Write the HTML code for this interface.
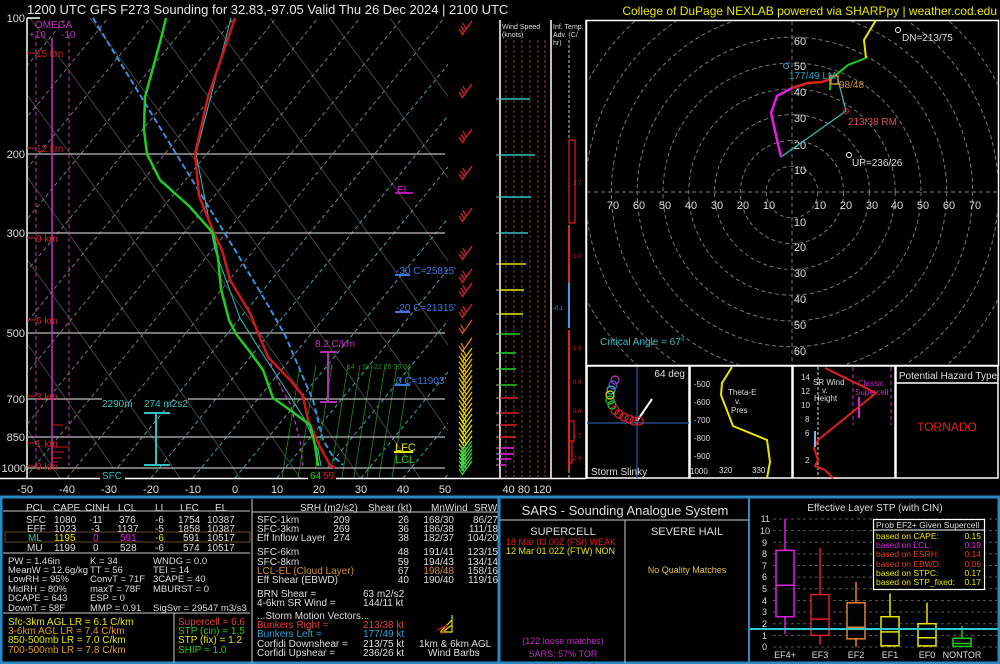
<!DOCTYPE html>
<html><head><meta charset="utf-8"><style>
html,body{margin:0;padding:0;background:#000;width:1000px;height:664px;overflow:hidden}
svg{display:block;font-family:"Liberation Sans",sans-serif}
</style></head><body>
<svg id="s" width="1000" height="664" viewBox="0 0 1000 664" xmlns="http://www.w3.org/2000/svg">
<rect width="1000" height="664" fill="#000"/>
<g id="grid"></g>
<text x="27" y="14" fill="#e8e8e8" font-size="13">1200 UTC GFS F273 Sounding for 32.83,-97.05 Valid  Thu 26 Dec 2024 | 2100 UTC</text>
<text x="997" y="15" fill="#e6e600" font-size="12" text-anchor="end">College of DuPage NEXLAB powered via SHARPpy | weather.cod.edu</text>
<line x1="27" y1="18" x2="27" y2="479" stroke="#fff" stroke-width="1.5"/>
<line x1="27" y1="18" x2="40" y2="18" stroke="#fff" stroke-width="1.5"/>
<line x1="0" y1="478.5" x2="586" y2="478.5" stroke="#fff" stroke-width="1.5"/>
<g fill="#ddd" font-size="11" text-anchor="end">
<text x="25" y="22">100</text><text x="25" y="158">200</text><text x="25" y="237">300</text><text x="25" y="337">500</text><text x="25" y="403">700</text><text x="25" y="441">850</text><text x="26" y="472">1000</text>
</g>
<g stroke="#bbb" stroke-width="1.3">
<line x1="27" y1="154" x2="445" y2="154"/><line x1="27" y1="233" x2="445" y2="233"/><line x1="27" y1="333" x2="445" y2="333"/>
<line x1="27" y1="399" x2="102" y2="399"/><line x1="188" y1="399" x2="445" y2="399"/>
<line x1="27" y1="437" x2="445" y2="437"/><line x1="27" y1="468" x2="445" y2="468"/>
</g>
<g fill="#ddd" font-size="11" text-anchor="middle">
<text x="25" y="493">-50</text><text x="67" y="493">-40</text><text x="109" y="493">-30</text><text x="151" y="493">-20</text><text x="193" y="493">-10</text><text x="235" y="493">0</text><text x="277" y="493">10</text><text x="319" y="493">20</text><text x="361" y="493">30</text><text x="403" y="493">40</text><text x="445" y="493">50</text>
<text x="527" y="493" text-anchor="middle">40  80 120</text>
</g>
<g stroke="#c030c0" stroke-width="1"><line x1="36" y1="35" x2="36" y2="468" stroke-dasharray="4,3"/><line x1="69" y1="35" x2="69" y2="468" stroke-dasharray="4,3"/><line x1="52" y1="38" x2="52" y2="468" stroke-width="1.5"/></g>
<text x="35" y="28" fill="#c030c0" font-size="10">OMEGA</text>
<text x="29" y="38" fill="#c030c0" font-size="10">+10</text><text x="61" y="38" fill="#c030c0" font-size="10">-10</text>
<g fill="#d02020" font-size="10"><text x="36" y="57">15 km</text><text x="36" y="152">12 km</text><text x="36" y="242">9 km</text><text x="36" y="324">6 km</text><text x="36" y="400">3 km</text><text x="36" y="447">1 km</text><text x="36" y="470">0 km</text></g>
<g stroke="#d02020"><line x1="27" y1="53" x2="36" y2="53"/><line x1="27" y1="148" x2="36" y2="148"/><line x1="27" y1="238" x2="36" y2="238"/><line x1="27" y1="320" x2="36" y2="320"/><line x1="27" y1="396" x2="36" y2="396"/><line x1="27" y1="443" x2="36" y2="443"/><line x1="27" y1="466" x2="36" y2="466"/>
<line x1="52" y1="425" x2="63" y2="425"/><line x1="52" y1="447" x2="70" y2="447"/><line x1="52" y1="452" x2="64" y2="452"/><line x1="52" y1="458" x2="62" y2="458"/><line x1="52" y1="462" x2="58" y2="462"/></g>
<polyline fill="none" stroke="#3a8ee0" stroke-width="2" stroke-dasharray="6,3" points="93,18 235,250 265,300 285,335 300,370 313,400 323,440 332,455 343,465"/>
<polyline fill="none" stroke="#c030c0" stroke-width="1.3" stroke-dasharray="4,3" points="265,350 282,390 290,403 300,440 303,467"/>
<polyline fill="none" stroke="#30c0c0" stroke-width="1" points="231,18 196,154 215,250 240,318 260,350 283,385 305,420 318,450 321,466"/>
<polyline fill="none" stroke="#d01818" stroke-width="2.5" points="235,18 208,97 195,154 199,196 214,233 222,250 230,280 250,313 268,357 290,380 303,396 308,420 320,447 330,465 335,468"/>
<polyline fill="none" stroke="#20cc20" stroke-width="2.5" points="166,18 162,35 145,97 144,130 147,154 160,180 190,207 213,233 218,258 221,289 229,320 236,334 250,352 263,370 273,398 290,410 310,425 315,445 318,466"/>
<text x="102" y="407" fill="#30c0c0" font-size="10">2290m</text>
<text x="144" y="407" fill="#30c0c0" font-size="10">274 m2s2</text>
<g stroke="#30c0c0" stroke-width="2"><line x1="156" y1="413" x2="156" y2="465"/><line x1="144" y1="413" x2="170" y2="413"/><line x1="144" y1="465" x2="170" y2="465"/></g>
<rect x="100" y="469" width="25" height="12" fill="#000"/><text x="102" y="479" fill="#30c0c0" font-size="10">SFC</text>
<text x="315" y="347" fill="#c030c0" font-size="10">8.2 C/km</text>
<g stroke="#b030b0" stroke-width="2"><line x1="328" y1="352" x2="328" y2="402"/><line x1="320" y1="352" x2="337" y2="352"/><line x1="320" y1="402" x2="337" y2="402"/></g>
<text x="397" y="193" fill="#e020e0" font-size="10">EL</text><line x1="395" y1="193" x2="413" y2="193" stroke="#e020e0" stroke-width="1.5"/>
<g fill="#3a78e0" font-size="10"><text x="396" y="274">-30 C=25815'</text><text x="396" y="311">-20 C=21315'</text><text x="396" y="384">0 C=11903'</text></g>
<g stroke="#3a78e0" stroke-width="2"><line x1="395" y1="275" x2="410" y2="275"/><line x1="395" y1="312" x2="410" y2="312"/><line x1="395" y1="385" x2="410" y2="385"/></g>
<text x="395" y="451" fill="#e6e600" font-size="11">LFC</text><line x1="394" y1="452" x2="413" y2="452" stroke="#e6e600" stroke-width="2"/>
<text x="395" y="463" fill="#20c020" font-size="11">LCL</text>
<rect x="308" y="469" width="28" height="12" fill="#000"/>
<text x="310" y="479" fill="#20cc20" font-size="10">64</text><text x="323" y="479" fill="#e02020" font-size="10">59</text>
<g fill="#2a8a2a" font-size="7"><text x="325" y="369">10</text><text x="347" y="369">14</text><text x="362" y="369">18</text><text x="374" y="369">22 26 30 34</text></g>
<g id="barbs"></g>
<line x1="500" y1="20" x2="500" y2="479" stroke="#fff" stroke-width="1.5"/>
<line x1="551" y1="20" x2="551" y2="479" stroke="#fff" stroke-width="1.5"/>
<line x1="586" y1="20" x2="586" y2="479" stroke="#fff" stroke-width="1.5"/>
<text x="502" y="29" fill="#ddd" font-size="7">Wind Speed</text><text x="502" y="37" fill="#ddd" font-size="7">(knots)</text>
<text x="553" y="29" fill="#ddd" font-size="7">Inf. Temp.</text><text x="553" y="37" fill="#ddd" font-size="7">Adv. (C/</text><text x="553" y="45" fill="#ddd" font-size="7">hr)</text>
<g id="ws"></g>
<line x1="569" y1="40" x2="569" y2="478" stroke="#ccc" stroke-dasharray="3,2"/>
<g fill="none" stroke="#e02020" stroke-width="1.2"><rect x="569" y="140" width="6" height="83"/><line x1="569" y1="227" x2="569" y2="282" stroke-width="2"/><line x1="569" y1="330" x2="569" y2="470" stroke-width="2"/><rect x="569" y="421" width="5" height="20"/><rect x="569" y="441" width="3" height="22"/></g>
<line x1="569" y1="283" x2="569" y2="328" stroke="#4a9ae0" stroke-width="2"/>
<g fill="#d02020" font-size="6"><text x="573" y="185">3.7</text><text x="573" y="258">1.0</text><text x="573" y="350">1.3</text><text x="573" y="384">0.4</text><text x="573" y="413">0.6</text><text x="573" y="438">5.7</text><text x="573" y="460">2.4</text></g>
<text x="553" y="310" fill="#4a9ae0" font-size="6">-0.1</text>
<rect x="586.5" y="20.5" width="412" height="345" fill="none" stroke="#fff" stroke-width="1.5"/>
<g id="hodo"></g>
<g fill="#ddd" font-size="11" text-anchor="middle">
<text x="800" y="45">60</text><text x="800" y="70">50</text><text x="800" y="96">40</text><text x="800" y="122">30</text><text x="800" y="149">20</text><text x="800" y="174">10</text>
<text x="800" y="226">10</text><text x="800" y="251">20</text><text x="800" y="277">30</text><text x="800" y="303">40</text><text x="800" y="329">50</text><text x="800" y="355">60</text>
<text x="613" y="209">70</text><text x="639" y="209">60</text><text x="665" y="209">50</text><text x="691" y="209">40</text><text x="717" y="209">30</text><text x="743" y="209">20</text><text x="769" y="209">10</text>
<text x="820" y="209">10</text><text x="846" y="209">20</text><text x="872" y="209">30</text><text x="897" y="209">40</text><text x="923" y="209">50</text><text x="949" y="209">60</text><text x="975" y="209">70</text>
</g>
<polyline fill="none" stroke="#30c0c0" stroke-width="1.2" points="781,157 846,111 838,80"/>
<polyline fill="none" stroke="#e020e0" stroke-width="2.5" points="781,157 771,113 777,96 792,88"/>
<polyline fill="none" stroke="#e02020" stroke-width="2.5" points="792,88 808,83 822,82 831,79"/>
<polyline fill="none" stroke="#20cc20" stroke-width="2" points="830,90 831,79 848,65 866,58"/>
<polyline fill="none" stroke="#e6e600" stroke-width="2" points="866,58 864,40 876,20"/>
<rect x="830" y="76" width="8" height="8" fill="none" stroke="#d09030" stroke-width="1.5"/>
<circle cx="786" cy="66" r="2.5" fill="none" stroke="#30a0c0"/><circle cx="846" cy="111" r="2.5" fill="none" stroke="#e02020"/>
<circle cx="898" cy="30" r="2.5" fill="none" stroke="#fff"/><circle cx="849" cy="155" r="2.5" fill="none" stroke="#fff"/>
<text x="902" y="41" fill="#ddd" font-size="10">DN=213/75</text>
<text x="852" y="166" fill="#ddd" font-size="10">UP=236/26</text>
<text x="789" y="79" fill="#30a0c0" font-size="10">177/49 LM</text>
<text x="839" y="88" fill="#d09030" font-size="10">98/48</text>
<text x="848" y="125" fill="#e05050" font-size="10">213/38 RM</text>
<text x="600" y="345" fill="#30c0c0" font-size="10">Critical Angle = 67°</text>
<g fill="none" stroke="#fff" stroke-width="1.5"><rect x="587" y="366" width="102" height="112"/><rect x="690" y="366" width="102" height="112"/><rect x="793" y="366" width="102" height="112"/><rect x="896" y="366" width="102" height="112"/><line x1="896" y1="383" x2="998" y2="383"/></g>
<line x1="587" y1="423" x2="689" y2="423" stroke="#1a4a8a" stroke-width="1.5"/><line x1="637" y1="367" x2="637" y2="478" stroke="#1a4a8a" stroke-width="1.5"/>
<text x="685" y="377" fill="#ddd" font-size="10" text-anchor="end">64 deg</text>
<text x="591" y="475" fill="#ddd" font-size="10">Storm Slinky</text>
<line x1="637" y1="421" x2="652" y2="399" stroke="#fff" stroke-width="2"/>
<g fill="none" stroke-width="1.2"><circle cx="615" cy="380" r="4" stroke="#c030c0"/><circle cx="613" cy="385" r="4" stroke="#4060e0"/><circle cx="611" cy="390" r="4" stroke="#30c0c0"/><circle cx="610" cy="395" r="4" stroke="#e6e600"/><circle cx="610" cy="400" r="4" stroke="#20cc20"/><circle cx="612" cy="405" r="4" stroke="#20cc20"/><circle cx="615" cy="410" r="4" stroke="#e02020"/><circle cx="619" cy="414" r="4" stroke="#e02020"/><circle cx="624" cy="417" r="4" stroke="#e02020"/><circle cx="629" cy="419" r="4" stroke="#e02020"/><circle cx="634" cy="421" r="4" stroke="#e02020"/><circle cx="639" cy="421" r="4" stroke="#e02020"/></g>
<polyline fill="none" stroke="#e6e600" stroke-width="2" points="732,367 722,383 721,395 733,426 767,440 770,462 767,478"/>
<g fill="#ddd" font-size="8"><text x="694" y="387">-500</text><text x="694" y="405">-600</text><text x="694" y="423">-700</text><text x="694" y="441">-800</text><text x="694" y="459">-900</text><text x="690" y="474">1000</text><text x="719" y="473">320</text><text x="752" y="473">330</text>
<text x="728" y="395">Theta-E</text><text x="735" y="404">v.</text><text x="731" y="413">Pres</text></g>
<line x1="818" y1="367" x2="818" y2="478" stroke="#ddd" stroke-dasharray="3,2"/>
<line x1="853" y1="367" x2="853" y2="425" stroke="#c030c0" stroke-dasharray="4,3"/><line x1="891" y1="367" x2="891" y2="425" stroke="#c030c0" stroke-dasharray="4,3"/>
<g fill="#ddd" font-size="8"><text x="801" y="380">14</text><text x="801" y="394">12</text><text x="801" y="408">10</text><text x="805" y="422">8</text><text x="805" y="436">6</text><text x="805" y="463">2</text>
<text x="813" y="385">SR Wind</text><text x="822" y="393">v.</text><text x="814" y="401">Height</text></g>
<text x="858" y="386" fill="#c030c0" font-size="8">Classic</text><text x="855" y="395" fill="#c030c0" font-size="8">Supercell</text>
<line x1="859" y1="397" x2="859" y2="418" stroke="#e020e0" stroke-width="2"/>
<polyline fill="none" stroke="#e02020" stroke-width="2" points="825,368 876,393 818,440 814,448 818,460 815,466 825,470 833,478"/>
<line x1="815" y1="431" x2="815" y2="447" stroke="#8ab0f0" stroke-width="2"/>
<text x="948" y="379" fill="#ddd" font-size="10" text-anchor="middle">Potential Hazard Type</text>
<text x="947" y="431" fill="#e02020" font-size="12" text-anchor="middle">TORNADO</text>
<rect x="1" y="497" width="998" height="166" fill="none" stroke="#2a8ac8" stroke-width="3"/>
<line x1="499" y1="497" x2="499" y2="664" stroke="#2a8ac8" stroke-width="3"/>
<line x1="749" y1="497" x2="749" y2="664" stroke="#2a8ac8" stroke-width="2"/>
<g stroke="#ccc" stroke-width="1"><line x1="3" y1="511" x2="250" y2="511"/><line x1="3" y1="553" x2="250" y2="553"/><line x1="3" y1="613" x2="250" y2="613"/><line x1="174" y1="613" x2="174" y2="663"/><line x1="252" y1="499" x2="252" y2="663"/><line x1="252" y1="512" x2="498" y2="512"/><line x1="500" y1="520" x2="749" y2="520"/><line x1="625" y1="520" x2="625" y2="663"/></g>
<rect x="5" y="532" width="245" height="10" fill="none" stroke="#6a4a20"/>
<g font-size="10" fill="#ddd">
<text x="26" y="511">PCL</text><text x="53" y="511">CAPE</text><text x="85" y="511">CINH</text><text x="118" y="511">LCL</text><text x="155" y="511">LI</text><text x="180" y="511">LFC</text><text x="215" y="511">EL</text>
<text x="26" y="523">SFC</text><text x="54" y="523">1080</text><text x="89" y="523">-11</text><text x="119" y="523">376</text><text x="155" y="523">-6</text><text x="178" y="523">1754</text><text x="207" y="523">10387</text>
<text x="27" y="532">EFF</text><text x="54" y="532">1023</text><text x="91" y="532">-3</text><text x="117" y="532">1137</text><text x="155" y="532">-5</text><text x="178" y="532">1858</text><text x="207" y="532">10387</text>
<text x="28" y="541" fill="#30c0c0">ML</text><text x="54" y="541" fill="#e6e600">1195</text><text x="93" y="541" fill="#e020e0">0</text><text x="120" y="541" fill="#e020e0">591</text><text x="155" y="541" fill="#e6e600">-6</text><text x="183" y="541">591</text><text x="207" y="541">10517</text>
<text x="27" y="551">MU</text><text x="54" y="551">1199</text><text x="93" y="551">0</text><text x="120" y="551">528</text><text x="155" y="551">-6</text><text x="183" y="551">574</text><text x="207" y="551">10517</text>
</g>
<g font-size="9.5" fill="#ddd">
<text x="8" y="564">PW = 1.46in</text><text x="90" y="564">K = 34</text><text x="153" y="564">WNDG = 0.0</text>
<text x="8" y="573">MeanW = 12.6g/kg</text><text x="90" y="573">TT = 56</text><text x="153" y="573">TEI = 14</text>
<text x="8" y="582">LowRH = 95%</text><text x="90" y="582">ConvT = 71F</text><text x="153" y="582">3CAPE = 40</text>
<text x="8" y="592">MidRH = 80%</text><text x="90" y="592">maxT = 78F</text><text x="153" y="592">MBURST = 0</text>
<text x="8" y="601">DCAPE = 643</text><text x="90" y="601">ESP = 0</text>
<text x="8" y="611">DownT = 58F</text><text x="90" y="611">MMP = 0.91</text><text x="153" y="611">SigSvr = 29547 m3/s3</text>
</g>
<g font-size="10" fill="#ddd">
<text x="8" y="625" fill="#e6e600">Sfc-3km AGL LR = 6.1 C/km</text>
<text x="8" y="634" fill="#e0a020">3-6km AGL LR = 7.4 C/km</text>
<text x="8" y="643" fill="#e6e600">850-500mb LR = 7.0 C/km</text>
<text x="8" y="653" fill="#e0a020">700-500mb LR = 7.8 C/km</text>
<text x="178" y="625" fill="#e04040">Supercell = 6.6</text>
<text x="178" y="634" fill="#20cc20">STP (cin) = 1.5</text>
<text x="178" y="643" fill="#e6e600">STP (fix) = 1.2</text>
<text x="178" y="653" fill="#20cc20">SHIP = 1.0</text>
<text x="300" y="511">SRH (m2/s2)</text><text x="368" y="511">Shear (kt)</text><text x="431" y="511">MnWind</text><text x="474" y="511">SRW</text>
<text x="257" y="523">SFC-1km</text><text x="257" y="532">SFC-3km</text><text x="257" y="541">Eff Inflow Layer</text>
<text x="257" y="555">SFC-6km</text><text x="257" y="565">SFC-8km</text><text x="257" y="574" fill="#d09030">LCL-EL (Cloud Layer)</text><text x="257" y="583">Eff Shear (EBWD)</text>
<text x="257" y="597">BRN Shear =</text><text x="257" y="606">4-6km SR Wind =</text>
<text x="257" y="619">...Storm Motion Vectors...</text>
<text x="257" y="628" fill="#e04040">Bunkers Right =</text><text x="257" y="637" fill="#30a0d0">Bunkers Left =</text>
<text x="257" y="647">Corfidi Downshear =</text><text x="257" y="656">Corfidi Upshear =</text>
<text x="363" y="597">63 m2/s2</text><text x="363" y="606">144/11 kt</text>
<text x="363" y="628" fill="#e04040">213/38 kt</text><text x="363" y="637" fill="#30a0d0">177/49 kt</text><text x="363" y="647">213/75 kt</text><text x="363" y="656">236/26 kt</text>
<text x="419" y="647">1km &amp; 6km AGL</text><text x="428" y="656">Wind Barbs</text>
</g>
<g font-size="10" fill="#ddd" text-anchor="end">
<text x="350" y="523">209</text><text x="350" y="532">269</text><text x="350" y="541">274</text>
<text x="409" y="523">26</text><text x="409" y="532">36</text><text x="409" y="541">38</text><text x="409" y="555">48</text><text x="409" y="565">59</text><text x="409" y="574">67</text><text x="409" y="583">40</text>
<text x="454" y="523">168/30</text><text x="454" y="532">186/38</text><text x="454" y="541">182/37</text><text x="454" y="555">191/41</text><text x="454" y="565">194/43</text><text x="454" y="574" fill="#d09030">198/48</text><text x="454" y="583">190/40</text>
<text x="498" y="523">86/27</text><text x="498" y="532">111/18</text><text x="498" y="541">104/20</text><text x="498" y="555">123/15</text><text x="498" y="565">134/14</text><text x="498" y="574">158/16</text><text x="498" y="583">119/16</text>
</g>
<g fill="none" stroke-width="1.2"><polyline points="452,615 452,632 440,632" stroke="#e6e600"/><line x1="441" y1="631" x2="452" y2="620" stroke="#e6e600"/><line x1="444" y1="631" x2="452" y2="625" stroke="#e6e600"/><polyline points="437,630 446,626 442,634" stroke="#e02020"/></g>
<g fill="#ddd" text-anchor="middle">
<text x="625" y="515" font-size="13">SARS - Sounding Analogue System</text>
<text x="563" y="535" font-size="11">SUPERCELL</text><text x="687" y="535" font-size="11">SEVERE HAIL</text>
<text x="687" y="573" font-size="9" fill="#e6c040">No Quality Matches</text>
<text x="563" y="644" font-size="9" fill="#c030c0">(122 loose matches)</text>
<text x="563" y="657" font-size="9" fill="#c030c0">SARS: 57% TOR</text>
<text x="875" y="511" font-size="10">Effective Layer STP (with CIN)</text>
</g>
<text x="506" y="545" font-size="9" fill="#e02020">18 Mar 03 00Z (FSI)   WEAK</text>
<text x="506" y="554" font-size="9" fill="#e6e600">12 Mar 01 02Z (FTW)   NON</text>
<g id="stp"></g>
<g fill="#ddd" font-size="9" text-anchor="middle"><text x="785" y="658">EF4+</text><text x="820" y="658">EF3</text><text x="856" y="658">EF2</text><text x="890" y="658">EF1</text><text x="927" y="658">EF0</text><text x="962" y="658">NONTOR</text></g>
<g fill="#ddd" font-size="9" text-anchor="end"><text x="770" y="522">11</text><text x="770" y="534">10</text><text x="767" y="546">9</text><text x="767" y="557">8</text><text x="767" y="569">7</text><text x="767" y="580">6</text><text x="767" y="592">5</text><text x="767" y="604">4</text><text x="767" y="615">3</text><text x="767" y="627">2</text><text x="767" y="639">1</text><text x="767" y="650">0</text></g>
<rect x="873.5" y="519.5" width="111" height="70" fill="#000" stroke="#fff" stroke-width="1.2"/>
<line x1="874" y1="530" x2="984" y2="530" stroke="#fff"/>
<text x="876" y="528" fill="#ddd" font-size="8.5">Prob EF2+ Given Supercell</text>
<g font-size="8.5"><text x="876" y="539" fill="#e6e600">based on CAPE:</text><text x="876" y="548" fill="#e020e0">based on LCL:</text><text x="876" y="557" fill="#e04020">based on ESRH:</text><text x="876" y="567" fill="#e04020">based on EBWD:</text><text x="876" y="576" fill="#e6e600">based on STPC:</text><text x="876" y="585" fill="#e6e600">based on STP_fixed:</text></g>
<g font-size="8.5" text-anchor="end"><text x="981" y="539" fill="#e6e600">0.15</text><text x="981" y="548" fill="#e020e0">0.19</text><text x="981" y="557" fill="#e04020">0.14</text><text x="981" y="567" fill="#e04020">0.06</text><text x="981" y="576" fill="#e6e600">0.17</text><text x="981" y="585" fill="#e6e600">0.17</text></g>
</svg>
<script>
var NS="http://www.w3.org/2000/svg";
function el(p,t,a){var e=document.createElementNS(NS,t);for(var k in a)e.setAttribute(k,a[k]);p.appendChild(e);return e;}
var g=document.getElementById('grid');
var clip=el(g,'clipPath',{id:'ck'});el(clip,'rect',{x:28,y:18,width:420,height:460});
var gc=el(g,'g',{'clip-path':'url(#ck)'});
for(var i=-4;i<12;i++){var x0=60+i*60;el(gc,'path',{d:'M'+x0+',478 Q'+(x0-120)+',300 '+(x0-330)+',18',fill:'none',stroke:'#444','stroke-width':1});}
for(var T=-160;T<=60;T+=10){var xb=235+4.2*T;var col=T>=-30?'#4aa0a0':'#777';el(gc,'line',{x1:xb,y1:478,x2:xb+0.82*460,y2:18,stroke:col,'stroke-dasharray':'4,3','stroke-width':1});}
[300,316,332,348,360,372,385,397,410].forEach(function(x,i){el(gc,'line',{x1:x-18,y1:478,x2:x,y2:365,stroke:'#1f7a1f','stroke-width':0.9});});
var b=document.getElementById('barbs');
function barb(y,c,n){var x=462;el(b,'line',{x1:x,y1:y,x2:x+10,y2:y-14,stroke:c,'stroke-width':1.3});
for(var k=0;k<n;k++){var yy=y-2-k*3;el(b,'line',{x1:x+1-k*0.3+ k*1.9,y1:yy+2,x2:x-3+k*1.9,y2:yy-4,stroke:c,'stroke-width':1.2});}}
[35,98,143,180,222,260,283,297,318].forEach(function(y){barb(y,'#e02020',3);});
barb(334,'#e05020',2);barb(352,'#e08020',2);
for(var y=362;y<455;y+=5.5){barb(y,y<420?'#e6c000':'#e6e600',3);}
for(var y=455;y<476;y+=4){barb(y,'#40d040',3);}
var w=document.getElementById('ws');
[506,514,522,530,538,545].forEach(function(x){el(w,'line',{x1:x,y1:40,x2:x,y2:478,stroke:'#7a4a20','stroke-dasharray':'3,2'});});
[[99,530,'#30c0c0'],[155,535,'#30c0c0'],[197,531,'#30c0c0'],[233,528,'#30c0c0'],[264,526,'#e6e600'],[290,524,'#e6e600'],[314,523,'#e6e600'],[334,520,'#20cc20'],[353,516,'#20cc20'],[369,516,'#20cc20'],[385,517,'#20cc20'],[398,518,'#e02020'],[413,519,'#e02020'],[425,517,'#e02020'],[437,516,'#e02020'],[448,514,'#e020e0'],[454,514,'#e020e0'],[459,511,'#e020e0'],[465,506,'#e020e0']].forEach(function(a){el(w,'line',{x1:500,y1:a[0],x2:a[1],y2:a[0],stroke:a[2],'stroke-width':1.6});el(w,'line',{x1:496,y1:a[0],x2:499,y2:a[0],stroke:'#aaa'});});
var h=document.getElementById('hodo');var hc=el(h,'clipPath',{id:'hc'});el(hc,'rect',{x:587,y:21,width:411,height:344});
var hg=el(h,'g',{'clip-path':'url(#hc)'});
for(var r=1;r<=9;r++)el(hg,'circle',{cx:792,cy:192,r:r*25.8,fill:'none',stroke:'#777','stroke-dasharray':'4,3'});
el(hg,'line',{x1:587,y1:192,x2:998,y2:192,stroke:'#777','stroke-dasharray':'4,3'});
el(hg,'line',{x1:792,y1:21,x2:792,y2:365,stroke:'#777','stroke-dasharray':'4,3'});
var s=document.getElementById('stp');function Y(v){return 647-11.64*v;}
for(var v=0;v<=11;v++)el(s,'line',{x1:773,y1:Y(v),x2:998,y2:Y(v),stroke:'#555','stroke-dasharray':'3,3'});
[[785,1.1,11,2.6,8.3,5.3,'#e020e0'],[820,0.2,8.5,1.0,4.5,2.4,'#e02020'],[856,0,5.6,0.7,3.8,1.7,'#e08030'],[890,0,4.6,0.1,2.6,1.3,'#e6e600'],[927,0,3.8,0.1,2.0,0.8,'#e6e600'],[962,0,1.8,0.05,0.75,0.3,'#20cc20']].forEach(function(a){
el(s,'line',{x1:a[0],y1:Y(a[1]),x2:a[0],y2:Y(a[2]),stroke:a[6],'stroke-width':1.5});
el(s,'rect',{x:a[0]-9,y:Y(a[4]),width:18,height:Y(a[3])-Y(a[4]),fill:'#000',stroke:a[6],'stroke-width':1.5});
el(s,'line',{x1:a[0]-9,y1:Y(a[5]),x2:a[0]+9,y2:Y(a[5]),stroke:a[6],'stroke-width':1.5});});
el(s,'line',{x1:750,y1:629,x2:998,y2:629,stroke:'#30c8c8','stroke-width':2});
</script>
</body></html>
